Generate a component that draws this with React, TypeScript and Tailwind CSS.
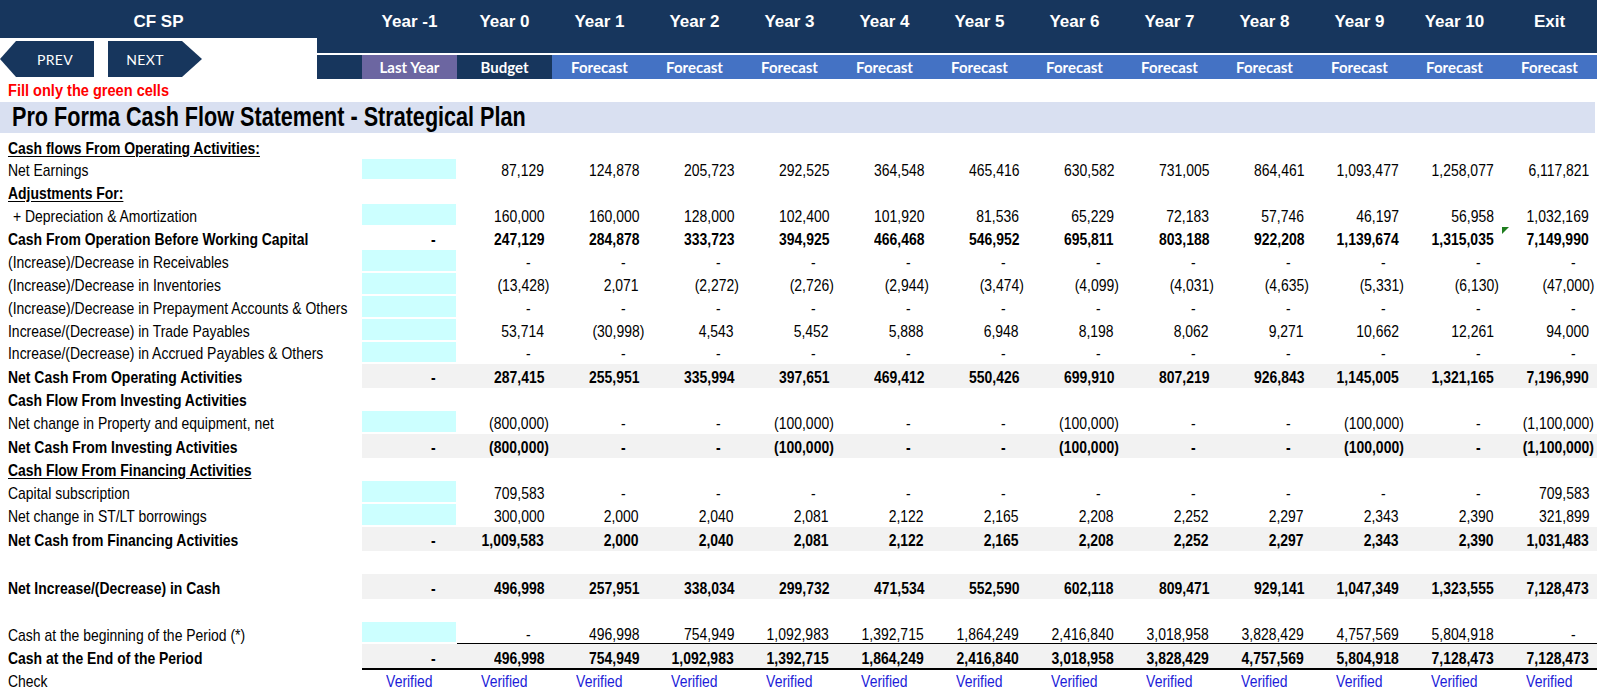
import React from "react";

const YEARS = ["Year -1", "Year 0", "Year 1", "Year 2", "Year 3", "Year 4", "Year 5", "Year 6", "Year 7", "Year 8", "Year 9", "Year 10", "Exit"];

type Kind = "head" | "headu" | "input" | "bold" | "total" | "blank" | "begin" | "end" | "check";

type Row = { label: string; kind: Kind; h: string; vals?: string[]; pad?: string };

const D = ["-", "-", "-", "-", "-", "-", "-", "-", "-", "-", "-", "-"];

const ROWS: Row[] = [
  { label: "Cash flows From Operating Activities:", kind: "headu", h: "h-[23px]" },
  { label: "Net Earnings", kind: "input", h: "h-[22px]", vals: ["87,129", "124,878", "205,723", "292,525", "364,548", "465,416", "630,582", "731,005", "864,461", "1,093,477", "1,258,077", "6,117,821"] },
  { label: "Adjustments For:", kind: "headu", h: "h-[23px]" },
  { label: "+ Depreciation & Amortization", kind: "input", h: "h-[23px]", pad: "pl-[13px]", vals: ["160,000", "160,000", "128,000", "102,400", "101,920", "81,536", "65,229", "72,183", "57,746", "46,197", "56,958", "1,032,169"] },
  { label: "Cash From Operation Before Working Capital", kind: "bold", h: "h-[23px]", vals: ["247,129", "284,878", "333,723", "394,925", "466,468", "546,952", "695,811", "803,188", "922,208", "1,139,674", "1,315,035", "7,149,990"] },
  { label: "(Increase)/Decrease in Receivables", kind: "input", h: "h-[23px]", vals: D },
  { label: "(Increase)/Decrease in Inventories", kind: "input", h: "h-[23px]", vals: ["(13,428)", "2,071", "(2,272)", "(2,726)", "(2,944)", "(3,474)", "(4,099)", "(4,031)", "(4,635)", "(5,331)", "(6,130)", "(47,000)"] },
  { label: "(Increase)/Decrease in Prepayment Accounts & Others", kind: "input", h: "h-[23px]", vals: D },
  { label: "Increase/(Decrease) in Trade Payables", kind: "input", h: "h-[23px]", vals: ["53,714", "(30,998)", "4,543", "5,452", "5,888", "6,948", "8,198", "8,062", "9,271", "10,662", "12,261", "94,000"] },
  { label: "Increase/(Decrease) in Accrued Payables & Others", kind: "input", h: "h-[22px]", vals: D },
  { label: "Net Cash From Operating Activities", kind: "total", h: "h-[24px]", vals: ["287,415", "255,951", "335,994", "397,651", "469,412", "550,426", "699,910", "807,219", "926,843", "1,145,005", "1,321,165", "7,196,990"] },
  { label: "Cash Flow From Investing Activities", kind: "head", h: "h-[23px]" },
  { label: "Net change in Property and equipment, net", kind: "input", h: "h-[23px]", vals: ["(800,000)", "-", "-", "(100,000)", "-", "-", "(100,000)", "-", "-", "(100,000)", "-", "(1,100,000)"] },
  { label: "Net Cash From Investing Activities", kind: "total", h: "h-[24px]", vals: ["(800,000)", "-", "-", "(100,000)", "-", "-", "(100,000)", "-", "-", "(100,000)", "-", "(1,100,000)"] },
  { label: "Cash Flow From Financing Activities", kind: "headu", h: "h-[23px]" },
  { label: "Capital subscription", kind: "input", h: "h-[23px]", vals: ["709,583", "-", "-", "-", "-", "-", "-", "-", "-", "-", "-", "709,583"] },
  { label: "Net change in ST/LT borrowings", kind: "input", h: "h-[23px]", vals: ["300,000", "2,000", "2,040", "2,081", "2,122", "2,165", "2,208", "2,252", "2,297", "2,343", "2,390", "321,899"] },
  { label: "Net Cash from Financing Activities", kind: "total", h: "h-[24px]", vals: ["1,009,583", "2,000", "2,040", "2,081", "2,122", "2,165", "2,208", "2,252", "2,297", "2,343", "2,390", "1,031,483"] },
  { label: "", kind: "blank", h: "h-[23px]" },
  { label: "Net Increase/(Decrease) in Cash", kind: "total", h: "h-[25px]", vals: ["496,998", "257,951", "338,034", "299,732", "471,534", "552,590", "602,118", "809,471", "929,141", "1,047,349", "1,323,555", "7,128,473"] },
  { label: "", kind: "blank", h: "h-[23px]" },
  { label: "Cash at the beginning of the Period (*)", kind: "begin", h: "h-[22px]", vals: ["-", "496,998", "754,949", "1,092,983", "1,392,715", "1,864,249", "2,416,840", "3,018,958", "3,828,429", "4,757,569", "5,804,918", "-"] },
  { label: "Cash at the End of the Period", kind: "end", h: "h-[26px]", vals: ["496,998", "754,949", "1,092,983", "1,392,715", "1,864,249", "2,416,840", "3,018,958", "3,828,429", "4,757,569", "5,804,918", "7,128,473", "7,128,473"] },
  { label: "Check", kind: "check", h: "h-[24px]" },
];

// Arial Narrow look: Liberation Sans squeezed horizontally
function Narrow({ children, right }: { children: React.ReactNode; right?: boolean }) {
  return (
    <span className={`inline-block whitespace-nowrap scale-x-[0.82] ${right ? "origin-right" : "origin-left"}`}>
      {children}
    </span>
  );
}

function numPad(v: string) {
  if (v === "-") return "pr-[21px]";
  if (v.startsWith("(")) return "pr-[3px]";
  return "pr-[8px]";
}

function rowPb(k: Kind) {
  if (k === "begin") return "pb-0";
  if (k === "end") return "pb-[3px]";
  if (k === "check") return "pb-[4px]";
  return "pb-[2px]";
}

function Arrow({ dir, label }: { dir: "l" | "r"; label: string }) {
  const shape =
    dir === "l"
      ? "[clip-path:polygon(16px_0,100%_0,100%_100%,16px_100%,0_50%)] pl-[16px]"
      : "[clip-path:polygon(0_0,calc(100%-20px)_0,100%_50%,calc(100%-20px)_100%,0_100%)] pr-[20px]";
  return (
    <div className={`flex h-[36px] w-[94px] items-center justify-center bg-[#17365d] font-['Lato',sans-serif] text-[14px] tracking-wide text-white ${shape}`}>
      {label}
    </div>
  );
}

export default function App() {
  return (
    <div className="h-[694px] w-[1600px] overflow-hidden bg-white font-['Liberation_Sans',Arial,sans-serif] text-[17px] text-black">
      {/* year header */}
      <div className="flex h-[38px] w-[1597px] bg-[#17365d] pt-[6px] text-[17px] font-bold text-white">
        <div className="flex w-[362px] shrink-0 items-center">
          <div className="w-[317px] text-center">CF SP</div>
        </div>
        {YEARS.map((y) => (
          <div key={y} className="flex w-[95px] shrink-0 items-center justify-center">{y}</div>
        ))}
      </div>

      <div className="flex h-[41px] w-[1597px]">
        <div className="flex w-[317px] shrink-0 items-start gap-[14px] pt-[3px]">
          <Arrow dir="l" label="PREV" />
          <Arrow dir="r" label="NEXT" />
        </div>
        <div className="flex flex-1 flex-col">
          <div className="h-[15px] bg-[#17365d]" />
          <div className="h-[2px] bg-white" />
          <div className="flex h-[24px] font-['Lato',sans-serif] text-[15px] font-bold text-white">
            <div className="w-[45px] bg-[#17365d]" />
            <div className="flex w-[95px] items-center justify-center bg-[#6c66a1]">Last Year</div>
            <div className="flex w-[95px] items-center justify-center bg-[#17365d]">Budget</div>
            {YEARS.slice(2).map((y) => (
              <div key={y} className="flex w-[95px] items-center justify-center bg-[#4472c4]">Forecast</div>
            ))}
          </div>
        </div>
      </div>

      <div className="flex h-[23px] items-center pl-[8px] text-[16px] font-bold text-[#ff0000]">
        <span className="inline-block origin-left scale-x-[0.91] whitespace-nowrap">Fill only the green cells</span>
      </div>

      <div className="flex h-[31px] w-[1595px] items-center bg-[#d9e0f1] pl-[12px] text-[27px] leading-none font-bold">
        <span className="inline-block origin-left scale-x-[0.8] whitespace-nowrap">Pro Forma Cash Flow Statement - Strategical Plan</span>
      </div>

      <div className="h-[3px]" />

      {ROWS.map((r, i) => {
        const bold = r.kind !== "input" && r.kind !== "begin" && r.kind !== "check";
        const gray = r.kind === "total" || r.kind === "end";
        const pb = rowPb(r.kind);
        return (
          <div key={i} className={`flex w-[1597px] leading-none ${r.h}`}>
            <div className={`flex w-[362px] shrink-0 items-end ${pb} ${r.pad ?? "pl-[8px]"} ${bold ? "font-bold" : ""}`}>
              <Narrow>
                <span className={r.kind === "headu" ? "underline underline-offset-2" : ""}>{r.label}</span>
              </Narrow>
            </div>
            {r.kind === "check" &&
              YEARS.map((y) => (
                <div key={y} className={`flex w-[95px] shrink-0 items-end justify-center ${pb} text-[#1c1cd8]`}>
                  <span className="inline-block scale-x-[0.82]">Verified</span>
                </div>
              ))}
            {r.vals && (
              <>
                {r.kind === "input" || r.kind === "begin" ? (
                  <div className="h-full w-[95px] shrink-0 border-r border-b-2 border-white bg-[#ccffff]" />
                ) : (
                  <div
                    className={`flex h-full w-[95px] shrink-0 items-end justify-end ${r.kind === "end" ? "pb-[1px]" : pb} pr-[21px] font-bold ${gray ? "bg-[#f2f2f2]" : ""} ${r.kind === "end" ? "border-b-2 border-black" : ""}`}
                  >
                    <Narrow right>-</Narrow>
                  </div>
                )}
                {r.vals.map((v, j) => (
                  <div
                    key={j}
                    className={`relative flex h-full w-[95px] shrink-0 items-end justify-end ${r.kind === "end" ? "pb-[1px]" : pb} ${numPad(v)} ${bold ? "font-bold" : ""} ${gray ? "bg-[#f2f2f2]" : ""} ${r.kind === "begin" ? "border-b border-black" : ""} ${r.kind === "end" ? "border-b-2 border-black" : ""}`}
                  >
                    {r.kind === "bold" && j === 11 && (
                      <div className="absolute left-0 top-0 h-0 w-0 border-r-[7px] border-t-[7px] border-r-transparent border-t-[#1e7d1e]" />
                    )}
                    <Narrow right>{v}</Narrow>
                  </div>
                ))}
              </>
            )}
          </div>
        );
      })}
    </div>
  );
}
